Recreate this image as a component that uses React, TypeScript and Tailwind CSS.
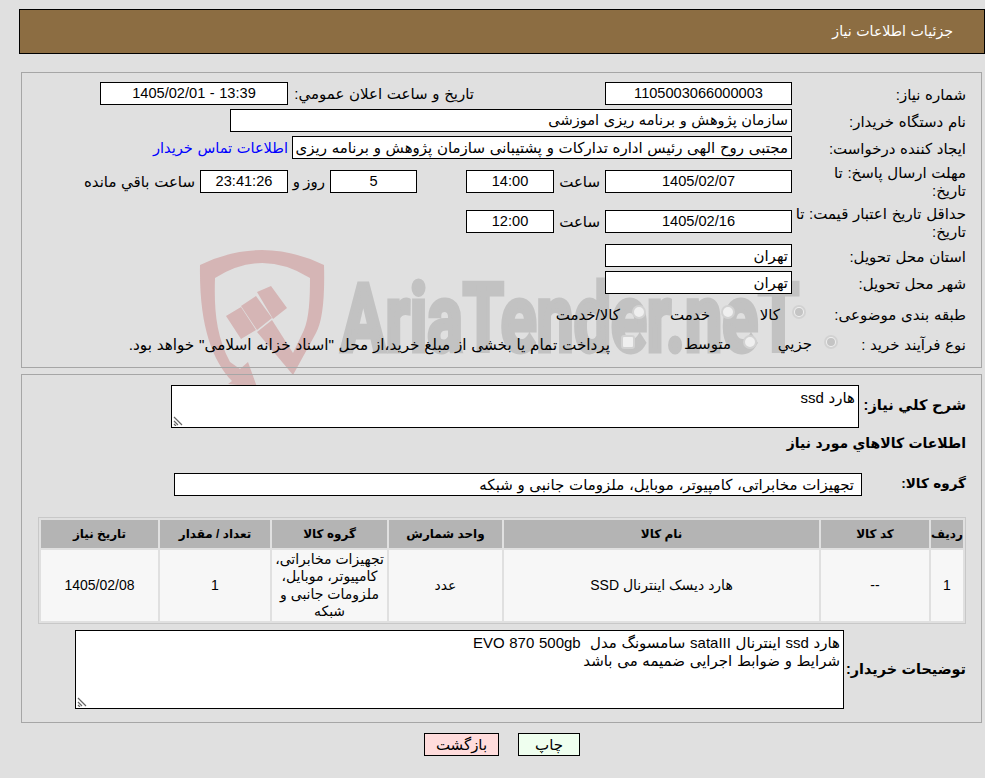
import type { ReactNode } from "react";

const font = '[font-family:"Liberation_Sans","DejaVu_Sans",sans-serif]';

function Box({ className = "", children }: { className?: string; children?: ReactNode }) {
  return (
    <div className={"box-border h-[23px] shrink-0 overflow-hidden whitespace-nowrap border border-black bg-white px-[3px] leading-[21px] " + className}>
      {children}
    </div>
  );
}

function NumBox({ className = "", children }: { className?: string; children?: ReactNode }) {
  return <Box className={"text-center text-[14.6px] " + className}>{children}</Box>;
}

function Label({ children }: { children: ReactNode }) {
  return <div className="w-[174px] shrink-0 pt-[2px] leading-[18px]">{children}</div>;
}

function Radio({ on = false }: { on?: boolean }) {
  return (
    <span className="mb-[3px] inline-flex h-[14px] w-[14px] shrink-0 items-center justify-center rounded-full border-2 border-[#d2d2d2] bg-[#efefef]">
      {on && <span className="h-[8px] w-[8px] rounded-full bg-[#c4c4c4]" />}
    </span>
  );
}

function Grip({ pos }: { pos: string }) {
  return (
    <svg className={"absolute " + pos} width="10" height="10" viewBox="0 0 10 10" stroke="#666" strokeWidth="1.2">
      <path d="M1 1 L9 9 M1 5 L5 9 M1 8 L3 10" />
    </svg>
  );
}

function Watermark() {
  return (
    <svg dir="ltr" className="pointer-events-none absolute left-0 top-0 z-0" width="985" height="400" viewBox="0 0 985 400">
      <path
        fill="#d5b5b5"
        d="M200 265 Q262 235 324 265 C325 300 322 322 316 333 L293 375 L257 332 L272 320 L293 353 L304 330 C309 318 310 300 310 278 Q262 248 215 278 C214 310 216 335 230 362 L240 369 L248 362 L257 387 L228 384 L232 381 C212 360 199 325 200 265 Z"
      />
      <path fill="#d5b5b5" d="M226 316 L241 307 L256 330 L241 339 Z M241 306 L256 296 L272 318 L257 330 Z M257 292 L271 286 L287 308 L273 319 Z" />
      <text
        x="341"
        y="351"
        direction="ltr"
        fill="#c2c2c2"
        stroke="#c2c2c2"
        strokeWidth="5"
        fontFamily="Roboto, sans-serif"
        fontWeight="700"
        fontSize="95"
        textLength="458"
        lengthAdjust="spacingAndGlyphs"
      >
        AriaTender.neT
      </text>
    </svg>
  );
}

const Panel = ({ className = "", children }: { className?: string; children: ReactNode }) => (
  <section className={"relative mr-[3px] box-border w-[961px] border border-[#a6a6a6] px-[15px] " + className}>{children}</section>
);

export default function App() {
  const row = ["1", "--", "هارد دیسک اینترنال SSD", "عدد", "تجهیزات مخابراتی، کامپیوتر، موبایل، ملزومات جانبی و شبکه", "1", "1405/02/08"];
  return (
    <div dir="rtl" className={"relative h-[778px] w-[985px] overflow-hidden bg-[#e0e0e0] pt-[9px] text-[15px] text-black [word-spacing:0.5px] " + font}>
      <Watermark />
      <header className="relative box-border flex h-[45px] w-[966px] items-center border border-black bg-[#8c6d42] pr-[31px] text-[14.2px] text-white">
        جزئیات اطلاعات نیاز
      </header>

      <div className="relative z-10 mt-[18px]">
        <Panel className="h-[296px] pt-[9px]">
          <div className="flex h-[23px] items-center">
            <Label>شماره نیاز:</Label>
            <NumBox className="w-[187px]">1105003066000003</NumBox>
            <div className="mr-[131px] w-[186px] shrink-0 whitespace-nowrap pt-[2px]">تاریخ و ساعت اعلان عمومي:</div>
            <NumBox className="w-[188px]"><span dir="ltr">1405/02/01 - 13:39</span></NumBox>
          </div>
          <div className="mt-[4px] flex h-[23px] items-center">
            <Label>نام دستگاه خریدار:</Label>
            <Box className="w-[562px] text-[14.6px]">سازمان پژوهش و برنامه ریزی اموزشی</Box>
          </div>
          <div className="mt-[4px] flex h-[23px] items-center">
            <Label>ایجاد کننده درخواست:</Label>
            <Box className="w-[500px]">مجتبی روح الهی رئیس اداره تدارکات و پشتیبانی سازمان پژوهش و برنامه ریزی اموزشی</Box>
            <span className="mr-[4px] whitespace-nowrap pt-[2px] text-[14.6px] text-[#0000ff]">اطلاعات تماس خریدار</span>
          </div>
          <div className="mt-[11px] flex h-[22px] items-center">
            <Label>مهلت ارسال پاسخ: تا<br />تاریخ:</Label>
            <NumBox className="h-[22px] w-[187px]">1405/02/07</NumBox>
            <span className="mr-[5px] w-[46px] shrink-0 pt-[2px]">ساعت</span>
            <NumBox className="h-[22px] w-[88px]">14:00</NumBox>
            <NumBox className="mr-[49px] h-[22px] w-[87px]">5</NumBox>
            <span className="mr-[5px] w-[37px] shrink-0 whitespace-nowrap pt-[2px] [word-spacing:-1px]">روز و</span>
            <NumBox className="h-[22px] w-[88px] bg-[#ffffee]">23:41:26</NumBox>
            <span className="mr-[5px] whitespace-nowrap pt-[2px]">ساعت باقي مانده</span>
          </div>
          <div className="mt-[18px] flex h-[23px] items-center">
            <Label>حداقل تاریخ اعتبار قیمت: تا<br />تاریخ:</Label>
            <NumBox className="w-[187px]">1405/02/16</NumBox>
            <span className="mr-[5px] w-[46px] shrink-0 pt-[2px]">ساعت</span>
            <NumBox className="w-[88px]">12:00</NumBox>
          </div>
          <div className="mt-[11px] flex h-[23px] items-center">
            <Label>استان محل تحویل:</Label>
            <Box className="w-[187px]">تهران</Box>
          </div>
          <div className="mt-[4px] flex h-[23px] items-center">
            <Label>شهر محل تحویل:</Label>
            <Box className="w-[187px]">تهران</Box>
          </div>
          <div className="mt-[8px] flex h-[23px] items-center">
            <Label>طبقه بندی موضوعی:</Label>
            <div className="mr-[-14px] flex items-center whitespace-nowrap">
              <Radio on />
              <span className="mr-[12px] w-[22px] pt-[3px]">کالا</span>
              <span className="mr-[23px] flex"><Radio /></span>
              <span className="mr-[11px] w-[40px] pt-[3px]">خدمت</span>
              <span className="mr-[24px] flex"><Radio /></span>
              <span className="mr-[12px] pt-[3px]">کالا/خدمت</span>
            </div>
          </div>
          <div className="mt-[7px] flex h-[23px] items-center">
            <Label>نوع فرآیند خرید :</Label>
            <div className="mr-[-46px] flex items-center whitespace-nowrap">
              <Radio on />
              <span className="mr-[12px] w-[36px] pt-[2px]">جزيي</span>
              <span className="mr-[19px] flex"><Radio /></span>
              <span className="mr-[12px] w-[46px] pt-[2px]">متوسط</span>
              <span className="mb-[3px] mr-[50px] inline-block h-[14px] w-[14px] rounded-[3px] border-2 border-[#d2d2d2] bg-[#efefef]" />
              <span className="mr-[11px] pt-[3px] text-[15.25px]">پرداخت تمام یا بخشی از مبلغ خرید،از محل "اسناد خزانه اسلامی" خواهد بود.</span>
            </div>
          </div>
        </Panel>

        <Panel className="mt-[6px] h-[349px] pt-[10px]">
          <div className="flex items-start">
            <div className="mt-[10px] w-[107px] shrink-0 whitespace-nowrap text-[14.6px] font-bold">شرح كلي نياز:</div>
            <div className="relative box-border h-[43px] w-[688px] shrink-0 border border-black bg-white px-[3px] pt-[2px] leading-[20px]">
              هارد ssd
              <Grip pos="bottom-[1px] left-[1px]" />
            </div>
          </div>
          <div className="mt-[5px] h-[19px] whitespace-nowrap text-[14px] font-bold">اطلاعات كالاهاي مورد نياز</div>
          <div className="mt-[21px] flex h-[23px] items-center">
            <div className="w-[104px] shrink-0 text-[13.6px] font-bold">گروه کالا:</div>
            <Box className="w-[688px] pr-[7px]">تجهیزات مخابراتی، کامپیوتر، موبایل، ملزومات جانبی و شبکه</Box>
          </div>
          <table className="mt-[21px] w-[928px] table-fixed border-separate border-spacing-[2px] border border-[#c8c8c8] text-center text-[14px] [word-spacing:0]">
            <colgroup>
              <col className="w-[32px]" />
              <col className="w-[108px]" />
              <col className="w-[315px]" />
              <col className="w-[113px]" />
              <col className="w-[115px]" />
              <col className="w-[110px]" />
              <col />
            </colgroup>
            <thead>
              <tr className="h-[28px] bg-[#b4b4b4] text-[12px]">
                {["ردیف", "کد کالا", "نام کالا", "واحد شمارش", "گروه کالا", "تعداد / مقدار", "تاریخ نیاز"].map((h) => (
                  <th key={h} className="whitespace-nowrap p-0 font-bold">{h}</th>
                ))}
              </tr>
            </thead>
            <tbody>
              <tr className="h-[71px] bg-[#f7f7f7]">
                {row.map((c, i) => (
                  <td key={i} className="p-0 leading-[17.4px]">{c}</td>
                ))}
              </tr>
            </tbody>
          </table>
          <div className="mt-[6px] flex items-center">
            <div className="w-[122px] shrink-0 whitespace-nowrap text-[14.4px] font-bold">توضیحات خریدار:</div>
            <div className="relative box-border h-[79px] w-[769px] shrink-0 whitespace-pre border border-black bg-white px-[3px] pt-[3px] leading-[18px]">
              {"هارد ssd اینترنال sataIII سامسونگ مدل  EVO 870 500gb\nشرایط و ضوابط اجرایی ضمیمه می باشد"}
              <Grip pos="bottom-[1px] left-[1px]" />
            </div>
          </div>
        </Panel>

        <div className="mr-[405px] mt-[10px] flex h-[23px] gap-[19px]">
          <button className="box-border h-[23px] w-[62px] border border-black bg-[#efffef]">چاپ</button>
          <button className="box-border h-[23px] w-[75px] border border-black bg-[#ffdcdc]">بازگشت</button>
        </div>
      </div>
    </div>
  );
}
